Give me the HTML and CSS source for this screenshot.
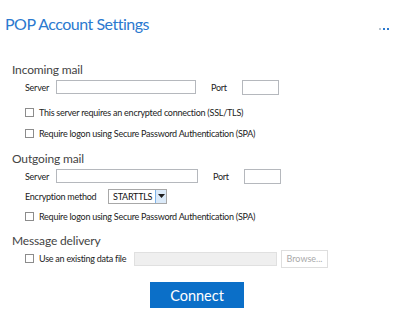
FILE: index.html
```html
<!DOCTYPE html>
<html>
<head>
<meta charset="utf-8">
<link rel="stylesheet" href="styles.css">
</head>
<body>
<div class="page">
  <div class="header">
    <h1 class="title">POP Account Settings</h1>
    <div class="dots"><span class="dot grey"></span><span class="dot blue"></span><span class="dot blue"></span></div>
  </div>

  <div class="section incoming">
    <div class="heading">Incoming mail</div>
    <div class="row field-row">
      <span class="label lbl-server">Server</span>
      <span class="input server-in"></span>
      <span class="label lbl-port">Port</span>
      <span class="input port-in"></span>
    </div>
    <div class="row check-row first-check">
      <span class="checkbox"></span>
      <span class="check-text">This server requires an encrypted connection (SSL/TLS)</span>
    </div>
    <div class="row check-row">
      <span class="checkbox"></span>
      <span class="check-text">Require logon using Secure Password Authentication (SPA)</span>
    </div>
  </div>

  <div class="section outgoing">
    <div class="heading">Outgoing mail</div>
    <div class="row field-row">
      <span class="label lbl-server">Server</span>
      <span class="input server-in out"></span>
      <span class="label lbl-port out">Port</span>
      <span class="input port-in"></span>
    </div>
    <div class="row enc-row">
      <span class="label lbl-enc">Encryption method</span>
      <span class="select">
        <span class="select-text">STARTTLS</span>
        <span class="select-btn"><svg width="7" height="4" viewBox="0 0 7 4"><path d="M0 0H7L3.5 4Z" fill="#1e1e1e"/></svg></span>
      </span>
    </div>
    <div class="row check-row">
      <span class="checkbox"></span>
      <span class="check-text">Require logon using Secure Password Authentication (SPA)</span>
    </div>
  </div>

  <div class="section delivery">
    <div class="heading">Message delivery</div>
    <div class="row file-row">
      <span class="checkbox"></span>
      <span class="check-text file-label">Use an existing data file</span>
      <span class="file-in"></span>
      <span class="browse">Browse...</span>
    </div>
  </div>

  <div class="actions">
    <button class="connect">Connect</button>
  </div>
</div>
</body>
</html>
```

FILE: styles.css
```css
html, body {
  margin: 0;
  padding: 0;
  background: #ffffff;
}

body {
  font-family: Lato, "Open Sans", "Liberation Sans", sans-serif;
  color: #333333;
  width: 395px;
  height: 320px;
  overflow: hidden;
}

.page {
  display: flex;
  flex-direction: column;
}

.header {
  display: flex;
  align-items: flex-start;
  height: 62px;
}

.title {
  margin: 12px 0 0 5px;
  font-size: 16px;
  line-height: 24px;
  font-weight: 400;
  letter-spacing: -0.5px;
  color: #2b79cf;
}

.dots {
  display: flex;
  gap: 2px;
  margin: 28px 0 0 auto;
  padding-right: 6px;
}

.dot {
  width: 2px;
  height: 2px;
}

.dot.grey { background: #b9c3cc; }
.dot.blue { background: #2b79cf; }

.section {
  display: flex;
  flex-direction: column;
}

.heading {
  height: 16px;
  line-height: 16px;
  font-size: 12px;
  letter-spacing: -0.15px;
  color: #444444;
  padding-left: 12px;
}

.row {
  display: flex;
  align-items: center;
  padding-left: 25px;
  font-size: 9px;
  letter-spacing: -0.25px;
  color: #222222;
}

.field-row {
  height: 16px;
  margin-top: 1px;
}

.label {
  flex: none;
}

.lbl-server {
  width: 31px;
}

.input {
  flex: none;
  box-sizing: border-box;
  height: 14px;
  border: 1px solid #b5b8bd;
  background: #ffffff;
}

.server-in {
  width: 140px;
}

.server-in.out {
  width: 142px;
}

.lbl-port {
  margin-left: 15px;
  width: 31px;
}

.lbl-port.out {
  margin-left: 15px;
}

.port-in {
  width: 37px;
  height: 15px;
}

.check-row {
  height: 20px;
  margin-top: 1px;
}

.first-check {
  margin-top: 7px;
}

.checkbox {
  flex: none;
  box-sizing: border-box;
  width: 9px;
  height: 9px;
  border: 1px solid #8c8c8c;
  background: #ffffff;
  margin-right: 5px;
}

.check-text {
  white-space: nowrap;
}

.outgoing {
  margin-top: 8px;
}

.enc-row {
  height: 18px;
  margin-top: 3px;
}

.lbl-enc {
  width: 83px;
}

.select {
  display: flex;
  box-sizing: border-box;
  width: 59px;
  height: 15px;
  border: 1px solid #a8a8a8;
  background: #ffffff;
}

.select-text {
  flex: 1;
  font-size: 9px;
  line-height: 13px;
  padding-left: 4px;
  color: #111111;
}

.select-btn {
  display: flex;
  align-items: center;
  justify-content: center;
  box-sizing: border-box;
  width: 11px;
  height: 13px;
  background: #dbeaf9;
  border-left: 1px solid #7eb4ea;
}

.delivery {
  margin-top: 7px;
}

.file-row {
  height: 19px;
}

.file-label {
  width: 91px;
}

.file-in {
  flex: none;
  box-sizing: border-box;
  width: 143px;
  height: 14px;
  margin-left: 4px;
  background: #efefef;
  border: 1px solid #e0e0e0;
}

.browse {
  flex: none;
  box-sizing: border-box;
  width: 47px;
  height: 18px;
  margin-left: 4px;
  border: 1px solid #dedede;
  background: #ffffff;
  color: #a9a9a9;
  font-size: 9px;
  letter-spacing: 0;
  display: flex;
  align-items: center;
  justify-content: center;
}

.actions {
  display: flex;
  justify-content: center;
  margin-top: 14px;
}

.connect {
  width: 94px;
  height: 26px;
  margin-left: -1px;
  border: none;
  background: #0b6fc8;
  color: #ffffff;
  font-family: Lato, "Open Sans", "Liberation Sans", sans-serif;
  font-size: 14.5px;
  padding: 0;
}
```
